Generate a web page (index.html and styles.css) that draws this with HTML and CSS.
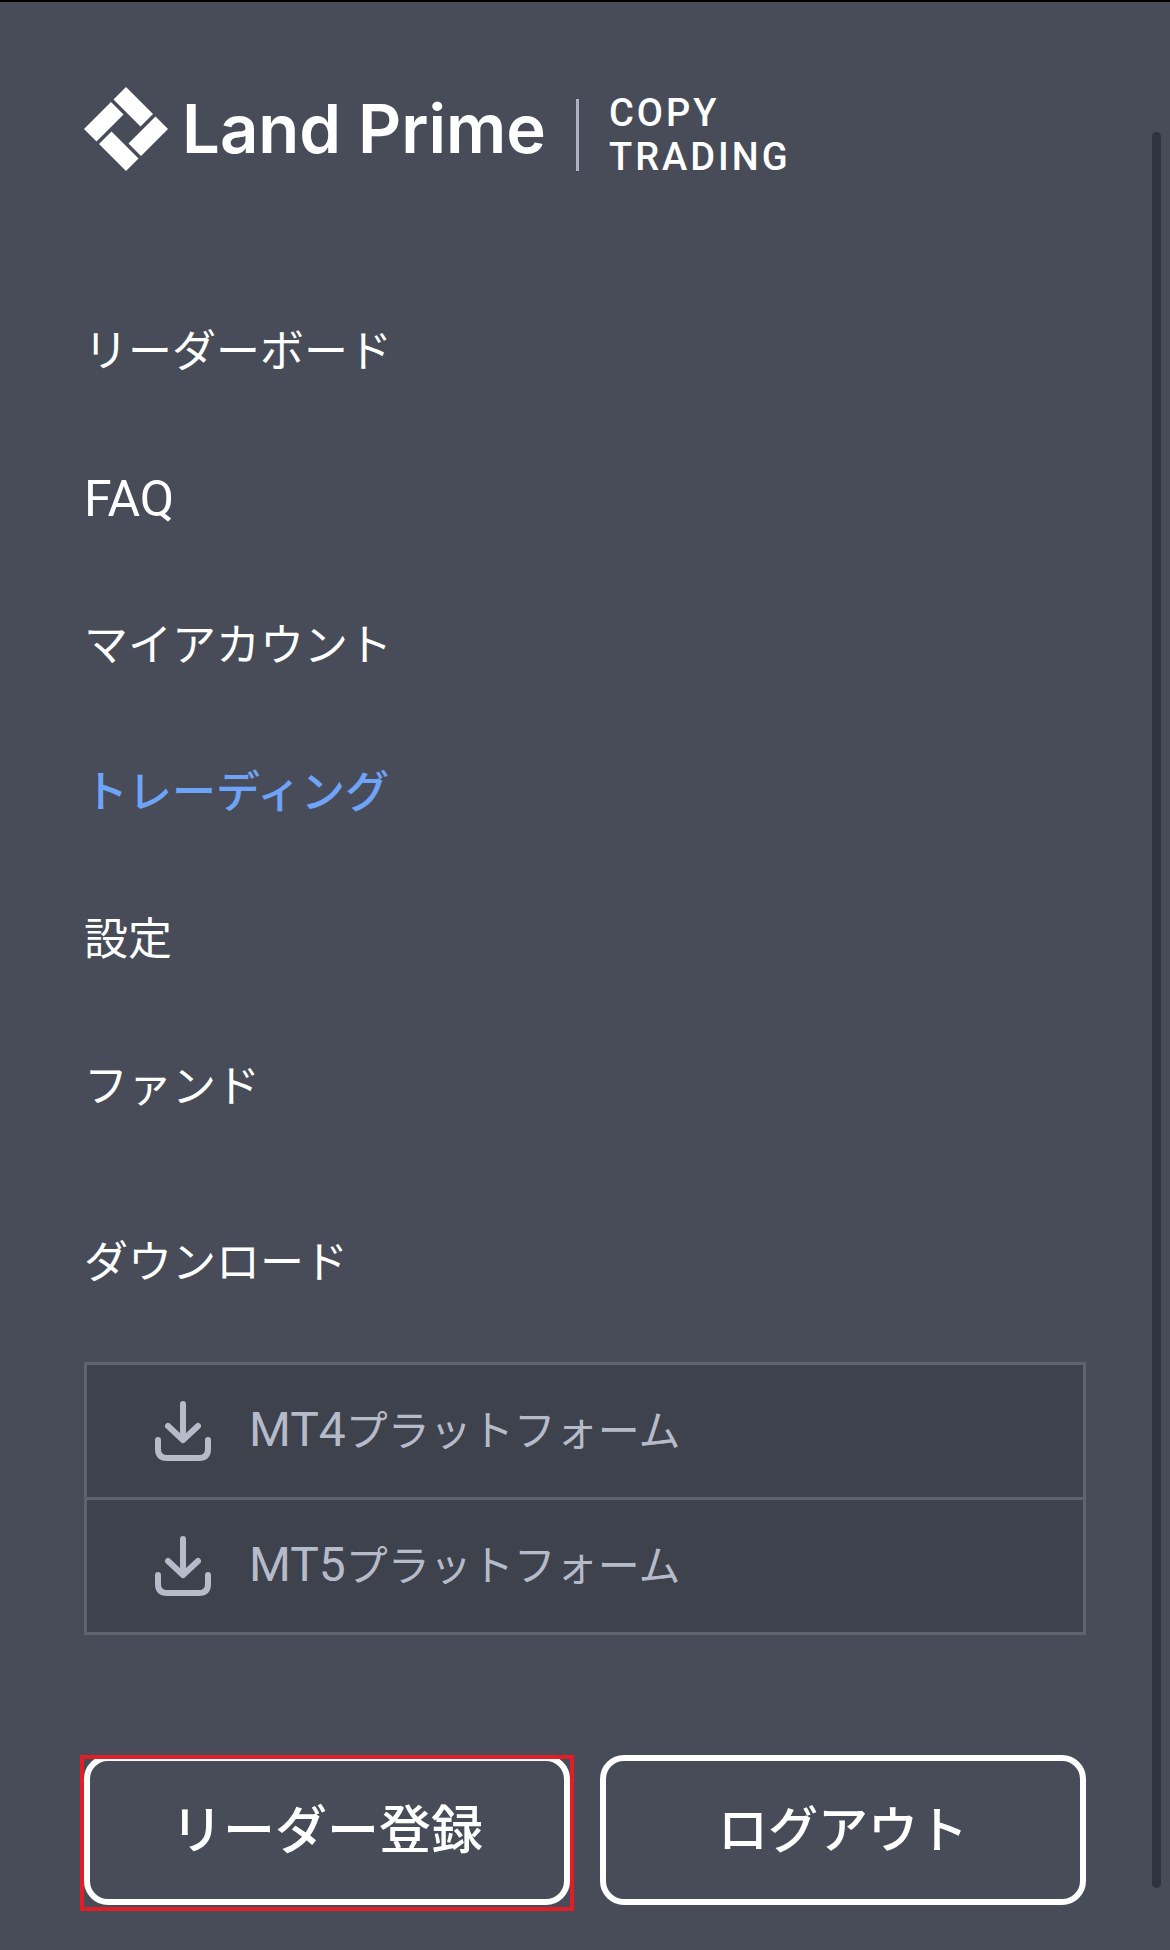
FILE: index.html
```html
<!DOCTYPE html>
<html lang="ja">
<head>
    <meta charset="UTF-8">
    <meta name="viewport" content="width=device-width, initial-scale=1.0">
    <title>Land Prime Copy Trading</title>
    <link rel="stylesheet" href="styles.css">
</head>
<body>
    <div class="drawer">
        <header>
            <a class="logo" href="#">
                <svg class="logo-mark" viewBox="0 0 84 84" aria-hidden="true">
                    <polygon points="42,0 69,27 56.5,39.5 29.5,12.5"/>
                    <polygon points="71.5,29.5 84,42 57,69 44.5,56.5"/>
                    <polygon points="42,84 15,57 27.5,44.5 54.5,71.5"/>
                    <polygon points="12.5,54.5 0,42 27,15 39.5,27.5"/>
                </svg>
                <span class="logo-name">Land Prime</span>
                <span class="logo-rule"></span>
                <span class="logo-sub">COPY<br>TRADING</span>
            </a>
        </header>

        <nav class="menu">
            <a href="#">リーダーボード</a>
            <a href="#" class="latin">FAQ</a>
            <a href="#">マイアカウント</a>
            <a href="#" class="active">トレーディング</a>
            <a href="#">設定</a>
            <a href="#">ファンド</a>
        </nav>

        <h2 class="download-title">ダウンロード</h2>
        <div class="downloads">
            <a href="#">
                <svg class="download-icon" viewBox="0 0 56 60" aria-hidden="true">
                    <path d="M28 3v36M13 25l15 14 15-14M3 39v9q0 9 9 9h32q9 0 9-9V39"/>
                </svg>
                <span class="download-label"><span class="latin">MT4</span>プラットフォーム</span>
            </a>
            <a href="#">
                <svg class="download-icon" viewBox="0 0 56 60" aria-hidden="true">
                    <path d="M28 3v36M13 25l15 14 15-14M3 39v9q0 9 9 9h32q9 0 9-9V39"/>
                </svg>
                <span class="download-label"><span class="latin">MT5</span>プラットフォーム</span>
            </a>
        </div>

        <div class="actions">
            <button type="button" class="highlight">リーダー登録</button>
            <button type="button">ログアウト</button>
        </div>

        <div class="scrollbar"></div>
    </div>
</body>
</html>
```

FILE: styles.css
```css
* {
    box-sizing: border-box;
}
body {
    margin: 0;
    background-color: #484c58;
    color: #fff;
    font-family: Roboto, "Noto Sans CJK JP", sans-serif;
}
a {
    color: inherit;
    text-decoration: none;
}
.drawer {
    position: relative;
    min-height: 100vh;
    padding: 85px 84px 44px;
    border-top: 2px solid #000;
}
.logo {
    display: flex;
    align-items: flex-start;
}
.logo-mark {
    width: 84px;
    height: 84px;
    margin-right: 14px;
    fill: #fff;
}
.logo-name {
    font-family: Inter, sans-serif;
    font-size: 67px;
    font-weight: 600;
    line-height: 84px;
    white-space: nowrap;
}
.logo-rule {
    width: 3px;
    height: 72px;
    margin: 12px 30px 0;
    background-color: #aeb2c2;
}
.logo-sub {
    margin-top: 4px;
    font-size: 38px;
    font-weight: 500;
    line-height: 44px;
    letter-spacing: 3px;
}
.menu {
    display: flex;
    flex-direction: column;
    margin-top: 100px;
}
.menu a {
    height: 147px;
    font-size: 44px;
    line-height: 147px;
}
.menu .latin {
    font-size: 50px;
}
.menu .active {
    color: #6fa3f7;
    font-weight: 500;
}
.download-title {
    margin: 64px 0 0;
    font-size: 44px;
    font-weight: 400;
    line-height: 76px;
}
.downloads {
    margin-top: 61px;
    border: 3px solid #5f636e;
    background-color: #3e424d;
    color: #b6bbc9;
    font-size: 42px;
}
.downloads .latin {
    font-size: 48px;
}
.downloads a {
    display: flex;
    align-items: center;
    gap: 38px;
    height: 132px;
    padding-left: 68px;
}
.downloads a + a {
    height: 135px;
    border-top: 3px solid #5f636e;
}
.download-label {
    padding-bottom: 8px;
}
.download-icon {
    width: 56px;
    height: 60px;
    fill: none;
    stroke: #b6bbc9;
    stroke-width: 6;
    stroke-linecap: round;
    stroke-linejoin: round;
}
.actions {
    display: grid;
    grid-template-columns: 1fr 1fr;
    gap: 30px;
    margin-top: 120px;
}
.actions button {
    height: 150px;
    padding: 0 0 8px;
    border: 6px solid #fff;
    border-radius: 24px;
    background: none;
    color: #fff;
    font-family: inherit;
    font-size: 50px;
    font-weight: 500;
    cursor: pointer;
}
/* red frame around the register button */
.actions .highlight {
    position: relative;
    font-size: 52px;
}
.highlight::after {
    content: "";
    position: absolute;
    inset: -6px -10px -12px;
    border: 4px solid #e11d26;
}
.scrollbar {
    position: absolute;
    top: 130px;
    right: 9px;
    bottom: 62px;
    width: 9px;
    border-radius: 5px;
    background-color: #2d333f;
}
```
